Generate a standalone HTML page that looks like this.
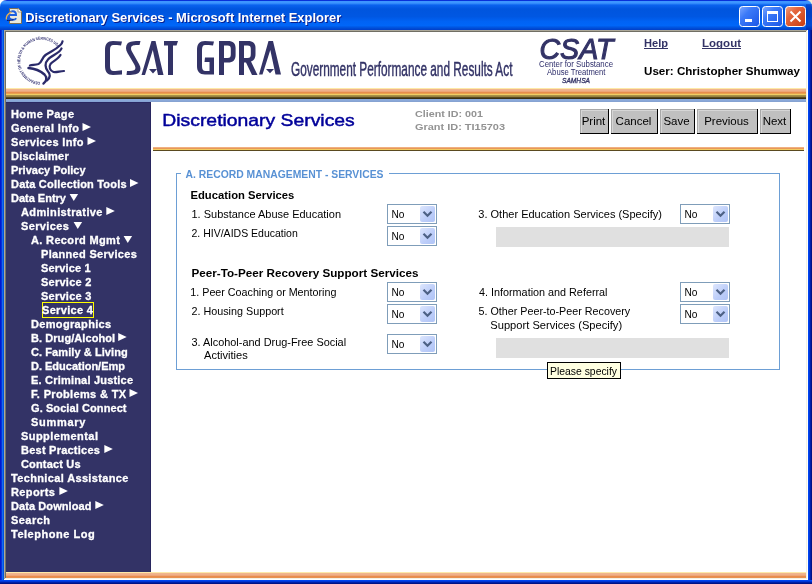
<!DOCTYPE html>
<html><head><meta charset="utf-8"><title>Discretionary Services</title>
<style>html,body{margin:0;padding:0;width:812px;height:584px;overflow:hidden;background:#fff}
svg{display:block;font-family:"Liberation Sans",sans-serif;will-change:transform}</style></head>
<body><svg width="812" height="584" viewBox="0 0 812 584">
<rect x="0" y="0" width="812" height="584" fill="#fff"/>
<defs>
<linearGradient id="tbg" x1="0" y1="0" x2="0" y2="30" gradientUnits="userSpaceOnUse">
<stop offset="0" stop-color="#0831d9"/><stop offset="0.033" stop-color="#0831d9"/>
<stop offset="0.04" stop-color="#3d95ff"/><stop offset="0.1" stop-color="#3d95ff"/>
<stop offset="0.17" stop-color="#0a62ee"/><stop offset="0.3" stop-color="#0055de"/>
<stop offset="0.55" stop-color="#0057e2"/><stop offset="0.72" stop-color="#0063f5"/>
<stop offset="0.85" stop-color="#0066f8"/><stop offset="0.93" stop-color="#0050da"/>
<stop offset="1" stop-color="#003ec8"/>
</linearGradient>
<linearGradient id="lb" x1="0" y1="0" x2="4" y2="0" gradientUnits="userSpaceOnUse">
<stop offset="0" stop-color="#0019cf"/><stop offset="0.5" stop-color="#0848f0"/><stop offset="1" stop-color="#166aee"/>
</linearGradient>
<linearGradient id="rb" x1="808" y1="0" x2="812" y2="0" gradientUnits="userSpaceOnUse">
<stop offset="0" stop-color="#0848f0"/><stop offset="0.5" stop-color="#0030c8"/><stop offset="1" stop-color="#001890"/>
</linearGradient>
<linearGradient id="bb" x1="0" y1="580" x2="0" y2="584" gradientUnits="userSpaceOnUse">
<stop offset="0" stop-color="#0848f0"/><stop offset="0.5" stop-color="#0030c8"/><stop offset="1" stop-color="#001890"/>
</linearGradient>
<linearGradient id="minb" x1="0" y1="0" x2="1" y2="1">
<stop offset="0" stop-color="#7fa8ff"/><stop offset="0.35" stop-color="#3c7af8"/><stop offset="1" stop-color="#1a55e6"/>
</linearGradient>
<linearGradient id="clb" x1="0" y1="0" x2="1" y2="1">
<stop offset="0" stop-color="#f0a080"/><stop offset="0.35" stop-color="#e4653c"/><stop offset="1" stop-color="#c83c10"/>
</linearGradient>
<linearGradient id="selb" x1="0" y1="0" x2="1" y2="1">
<stop offset="0" stop-color="#dde6fd"/><stop offset="0.6" stop-color="#bccdf9"/><stop offset="1" stop-color="#b0c4f6"/>
</linearGradient>
</defs>
<rect x="804" y="0" width="8" height="8" fill="#ece9d8"/>
<path d="M0,7 Q0,0 7,0 L805,0 Q812,0 812,7 L812,30 L0,30 Z" fill="url(#tbg)"/>
<rect x="0" y="30" width="1" height="554" fill="#0019cf"/>
<rect x="1" y="30" width="1" height="554" fill="#0831d9"/>
<rect x="2" y="30" width="1" height="554" fill="#166aee"/>
<rect x="3" y="30" width="1" height="554" fill="#0053e1"/>
<rect x="808" y="30" width="1" height="554" fill="#0045f0"/>
<rect x="809" y="30" width="1" height="554" fill="#0036d6"/>
<rect x="810" y="30" width="1" height="554" fill="#0020a8"/>
<rect x="811" y="30" width="1" height="554" fill="#001286"/>
<rect x="0" y="580" width="812" height="1" fill="#0045f0"/>
<rect x="0" y="581" width="812" height="1" fill="#0036d6"/>
<rect x="0" y="582" width="812" height="1" fill="#0020a8"/>
<rect x="0" y="583" width="812" height="1" fill="#001286"/>
<rect x="806" y="4" width="6" height="26" fill="#001890" opacity="0.35"/>
<rect x="4" y="30" width="804" height="1" fill="#aca899"/>
<rect x="4" y="30" width="1" height="550" fill="#aca899"/>
<rect x="5" y="31" width="802" height="1" fill="#716f64"/>
<rect x="5" y="31" width="1" height="548" fill="#716f64"/>
<rect x="806" y="31" width="1" height="549" fill="#f1efe2"/>
<rect x="5" y="578" width="802" height="1" fill="#f1efe2"/>
<rect x="807" y="30" width="1" height="550" fill="#fff"/>
<rect x="4" y="579" width="804" height="1" fill="#fff"/>
<text x="25.2" y="22" font-size="13.6" font-weight="bold" fill="#0a1e8c" textLength="316" lengthAdjust="spacingAndGlyphs" transform="translate(1,1)">Discretionary Services - Microsoft Internet Explorer</text>
<text x="25.2" y="22" font-size="13.6" font-weight="bold" fill="#fff" textLength="316" lengthAdjust="spacingAndGlyphs">Discretionary Services - Microsoft Internet Explorer</text>
<path d="M9.5,8.5 L18.5,8.5 L21.5,11.5 L21.5,23.5 L9.5,23.5 Z" fill="#ebe9dc" stroke="#7d7057"/>
<path d="M18,8.5 L18,12 L21.5,12" fill="#fff" stroke="#9a9080" stroke-width="0.8"/>
<path d="M10,15 L16,15 C16,12.5 14.5,11.3 12.7,11.3 C10.3,11.3 8.8,13.3 8.8,15.6 C8.8,18.2 10.5,19.8 12.8,19.8 C14.3,19.8 15.5,19.2 16.2,18.2" fill="none" stroke="#1c5ee0" stroke-width="2"/>
<path d="M6.3,19.5 C6,16.5 8,13.5 11.5,11.8" fill="none" stroke="#e8b050" stroke-width="1.3"/>
<path d="M7,20.5 C9,20.5 11,20.5 13.5,19.6" fill="none" stroke="#101860" stroke-width="1"/>
<rect x="739.5" y="6.5" width="20" height="20" rx="3" fill="url(#minb)" stroke="#fff"/>
<rect x="762.5" y="6.5" width="20" height="20" rx="3" fill="url(#minb)" stroke="#fff"/>
<rect x="785.5" y="6.5" width="20" height="20" rx="3" fill="url(#clb)" stroke="#fff"/>
<rect x="745" y="19" width="7" height="3" fill="#fff"/>
<rect x="767.5" y="11.5" width="10" height="10" fill="none" stroke="#fff"/>
<rect x="767" y="11" width="11" height="3" fill="#fff"/>
<path d="M790.5,11.5 L800.5,21.5 M800.5,11.5 L790.5,21.5" stroke="#fff" stroke-width="2"/>
<rect x="6" y="88" width="800" height="1" fill="#fde9a8"/>
<rect x="6" y="89" width="800" height="1" fill="#f0b48c"/>
<rect x="6" y="90" width="800" height="1" fill="#efb08a"/>
<rect x="6" y="91" width="800" height="1" fill="#eda577"/>
<rect x="6" y="92" width="800" height="1" fill="#e88c4c"/>
<rect x="6" y="93" width="800" height="1" fill="#eaa050"/>
<rect x="6" y="94" width="800" height="1" fill="#f0cc62"/>
<rect x="6" y="95" width="800" height="1" fill="#a89048"/>
<rect x="6" y="96" width="800" height="1" fill="#98823e"/>
<rect x="6" y="97" width="800" height="1" fill="#5a4a20"/>
<rect x="6" y="98" width="800" height="1" fill="#3a2e12"/>
<rect x="6" y="99" width="800" height="1" fill="#8aa8d8"/>
<rect x="6" y="100" width="800" height="1" fill="#8aa8d8"/>
<rect x="6" y="101" width="800" height="1" fill="#86a3d2"/>
<rect x="6" y="102" width="145" height="470" fill="#333366"/>
<rect x="6" y="102" width="145" height="1" fill="#2a2862"/>
<rect x="150" y="102" width="1" height="470" fill="#28265f"/>
<rect x="6" y="572" width="800" height="1" fill="#fde9a8"/>
<rect x="6" y="573" width="800" height="1" fill="#f0b48c"/>
<rect x="6" y="574" width="800" height="1" fill="#efb08a"/>
<rect x="6" y="575" width="800" height="1" fill="#eda577"/>
<rect x="6" y="576" width="800" height="1" fill="#e88c4c"/>
<rect x="6" y="577" width="800" height="1" fill="#e8904e"/>
<rect x="153" y="147" width="651" height="1" fill="#f0b080"/>
<rect x="153" y="148" width="651" height="1" fill="#e8985a"/>
<rect x="153" y="149" width="651" height="1" fill="#f2cc60"/>
<rect x="153" y="150" width="651" height="1" fill="#5a4a20"/>
<defs><path id="hhsarc" d="M40,82 A21.2,21.2 0 1 1 57.5,47"/></defs>
<text font-size="4.2" font-weight="bold" fill="#2e2e70"><textPath href="#hhsarc" textLength="84" lengthAdjust="spacingAndGlyphs">DEPARTMENT OF HEALTH &amp; HUMAN SERVICES USA</textPath></text>
<g fill="none" stroke="#2a2a6a" stroke-linecap="round">
<path d="M62.5,41.5 C62,47 51,51 45.5,55 C41.5,58 42,62.5 38.5,64 C35.5,65 32,64.8 30,65.5" stroke-width="2.3"/>
<path d="M61.5,48.5 C60,53 51,56 48,59.5 C44.5,63 45,68 48,71.5 C50.5,74 50.5,77.5 47,80.5" stroke-width="2.3"/>
<path d="M60.5,55 C58.5,59 53,61 50.5,64 C48.5,67 50,70.5 53.5,72 C57,72.5 60,71 64,71" stroke-width="2.2"/>
<path d="M28.5,68 C35,68.5 40,70.5 44.5,74.5 C47.5,77.5 46.5,81.5 43.5,83.5" stroke-width="2.4"/>
</g>
<g fill="#333366" fill-rule="evenodd">
<path d="M122,41.5 L121,45.5 C118,45 116,45 113.5,45 C111,45 110,46.5 110,50 L110,66 C110,69.5 111,71 113.5,71 C116,71 119,70.8 122,70.3 L122,74.5 C119,74.8 116,75 113,75 C107.5,75 105,72 105,66 L105,50 C105,44 107.5,41 113,41 C116,41 119,41.2 122,41.5 Z"/>
<path d="M140.5,41 L139.5,45 C136,45 132.5,45 131.5,46.5 C130.5,48 131,50 132.5,52.5 L139,64 C141,67.5 141,70.5 139,72.5 C137,74.5 132,75 126.5,75 L127,71 C131,71 134,71 135,69.5 C135.8,68 135.5,66.5 134,64 L127.5,53 C125.5,49.5 125.5,46 127.5,43.5 C129.5,41.5 134,41 140.5,41 Z"/>
<path d="M151.5,41 L155.5,41 L163.5,75 L158,75 L152.8,50 L145,75 L141.5,75 Z M149,69 L157,69 L153,73.5 Z"/>
<path d="M164,41 L178,41 L176.5,45.5 L173,45.5 L173,75 L168,75 L168,45.5 L164,45.5 Z"/>
<path d="M214,41.5 L213,45.5 C210,45 207.5,45 205,45 C203,45 202,46.5 202,50 L202,66 C202,69.5 203,71 205.5,71 L209.5,71 L209.5,62 L204.5,62 L205,57.5 L214,57.5 L214,74.5 L205,74.5 C199.5,74.5 197,71.5 197,66 L197,50 C197,44 199.5,41 205,41 C208,41 211,41.2 214,41.5 Z"/>
<path d="M219,41 L228,41 C233,41 235.6,43.5 235.6,48 L235.6,55 C235.6,60 233,62.5 228,62.5 L224,62.5 L224,75 L219,75 Z M224,45.5 L227.5,45.5 C230,45.5 230.8,46.5 230.8,49 L230.8,54.5 C230.8,57 230,58 227.5,58 L224,58 Z"/>
<path d="M239,41 L248,41 C253,41 255.5,43.5 255.5,48 L255.5,54 C255.5,58 254,60.5 251,61.5 L257.5,75 L252,75 L246,62.5 L244,62.5 L244,75 L239,75 Z M244,45.5 L247.5,45.5 C250,45.5 250.8,46.5 250.8,49 L250.8,54 C250.8,57 250,58 247.5,58 L244,58 Z"/>
<path d="M268.5,41 L273,41 L281,74.5 L275.5,74.5 L270.3,50 L262.5,74.5 L259,74.5 Z M266,69 L274,69 L270,73.2 Z"/>
</g>
<text x="0" y="76" font-size="19.5" fill="#333366" transform="translate(291,0) scale(0.607,1)" stroke="#333366" stroke-width="0.45">Government Performance and Results Act</text>
<text x="539.5" y="58.5" font-size="29" font-style="italic" fill="#333366" textLength="74" lengthAdjust="spacingAndGlyphs" stroke="#333366" stroke-width="1.1">CSAT</text>
<text x="539" y="66.7" font-size="9.6" fill="#2e2e6b" textLength="74" lengthAdjust="spacingAndGlyphs">Center for Substance</text>
<text x="547" y="75.3" font-size="9.6" fill="#2e2e6b" textLength="58.5" lengthAdjust="spacingAndGlyphs">Abuse Treatment</text>
<text x="562" y="82.5" font-size="6.5" font-style="italic" fill="#333366" textLength="28" lengthAdjust="spacingAndGlyphs" stroke="#333366" stroke-width="0.3">SAMHSA</text>
<text x="644" y="47" font-size="11" font-weight="bold" fill="#333366" textLength="24" lengthAdjust="spacingAndGlyphs">Help</text>
<rect x="644" y="48" width="24" height="1" fill="#333366"/>
<text x="702" y="47" font-size="11" font-weight="bold" fill="#333366" textLength="39" lengthAdjust="spacingAndGlyphs">Logout</text>
<rect x="702" y="48" width="39" height="1" fill="#333366"/>
<text x="644" y="75" font-size="11" font-weight="bold" fill="#000" textLength="156" lengthAdjust="spacingAndGlyphs">User: Christopher Shumway</text>
<g id="nav">
<text id="n0" x="11" y="118" font-size="11" font-weight="bold" fill="#fff" stroke="#fff" stroke-width="0.3" textLength="63.12" lengthAdjust="spacing">Home Page</text>
<text id="n1" x="11" y="132" font-size="11" font-weight="bold" fill="#fff" stroke="#fff" stroke-width="0.3" textLength="67.94" lengthAdjust="spacing">General Info</text>
<path d="M82.5,123 L91.0,127 L82.5,131 Z" fill="#fff"/>
<text id="n2" x="11" y="146" font-size="11" font-weight="bold" fill="#fff" stroke="#fff" stroke-width="0.3" textLength="72.48" lengthAdjust="spacing">Services Info</text>
<path d="M87.5,137 L96.0,141 L87.5,145 Z" fill="#fff"/>
<text id="n3" x="11" y="160" font-size="11" font-weight="bold" fill="#fff" stroke="#fff" stroke-width="0.3" textLength="57.66" lengthAdjust="spacing">Disclaimer</text>
<text id="n4" x="11" y="174" font-size="11" font-weight="bold" fill="#fff" stroke="#fff" stroke-width="0.3" textLength="74.56" lengthAdjust="spacing">Privacy Policy</text>
<text id="n5" x="11" y="188" font-size="11" font-weight="bold" fill="#fff" stroke="#fff" stroke-width="0.3" textLength="115.54" lengthAdjust="spacing">Data Collection Tools</text>
<path d="M130.0,179 L138.5,183 L130.0,187 Z" fill="#fff"/>
<text id="n6" x="11" y="202" font-size="11" font-weight="bold" fill="#fff" stroke="#fff" stroke-width="0.3" textLength="54.98" lengthAdjust="spacing">Data Entry</text>
<path d="M69.6,194 L78.1,194 L73.8,201 Z" fill="#fff"/>
<text id="n7" x="21" y="216" font-size="11" font-weight="bold" fill="#fff" stroke="#fff" stroke-width="0.3" textLength="81.47" lengthAdjust="spacing">Administrative</text>
<path d="M106.3,207 L114.8,211 L106.3,215 Z" fill="#fff"/>
<text id="n8" x="21" y="230" font-size="11" font-weight="bold" fill="#fff" stroke="#fff" stroke-width="0.3" textLength="47.77" lengthAdjust="spacing">Services</text>
<path d="M73.6,222 L82.1,222 L77.8,229 Z" fill="#fff"/>
<text id="n9" x="31" y="244" font-size="11" font-weight="bold" fill="#fff" stroke="#fff" stroke-width="0.3" textLength="88.89" lengthAdjust="spacing">A. Record Mgmt</text>
<path d="M123.6,236 L132.1,236 L127.8,243 Z" fill="#fff"/>
<text id="n10" x="41" y="258" font-size="11" font-weight="bold" fill="#fff" stroke="#fff" stroke-width="0.3" textLength="95.86" lengthAdjust="spacing">Planned Services</text>
<text id="n11" x="41" y="272" font-size="11" font-weight="bold" fill="#fff" stroke="#fff" stroke-width="0.3" textLength="49.53" lengthAdjust="spacing">Service 1</text>
<text id="n12" x="41" y="286" font-size="11" font-weight="bold" fill="#fff" stroke="#fff" stroke-width="0.3" textLength="50.33" lengthAdjust="spacing">Service 2</text>
<text id="n13" x="41" y="300" font-size="11" font-weight="bold" fill="#fff" stroke="#fff" stroke-width="0.3" textLength="50.33" lengthAdjust="spacing">Service 3</text>
<rect x="42.5" y="302.5" width="51" height="15" fill="none" stroke="#ffff00"/>
<text id="n14" x="42" y="314" font-size="11" font-weight="bold" fill="#fff" stroke="#fff" stroke-width="0.3" textLength="50.93" lengthAdjust="spacing">Service 4</text>
<text id="n15" x="31" y="328" font-size="11" font-weight="bold" fill="#fff" stroke="#fff" stroke-width="0.3" textLength="80.17" lengthAdjust="spacing">Demographics</text>
<text id="n16" x="31" y="342" font-size="11" font-weight="bold" fill="#fff" stroke="#fff" stroke-width="0.3" textLength="84.11" lengthAdjust="spacing">B. Drug/Alcohol</text>
<path d="M118.2,333 L126.7,337 L118.2,341 Z" fill="#fff"/>
<text id="n17" x="31" y="356" font-size="11" font-weight="bold" fill="#fff" stroke="#fff" stroke-width="0.3" textLength="96.71" lengthAdjust="spacing">C. Family &amp; Living</text>
<text id="n18" x="31" y="370" font-size="11" font-weight="bold" fill="#fff" stroke="#fff" stroke-width="0.3" textLength="93.97" lengthAdjust="spacing">D. Education/Emp</text>
<text id="n19" x="31" y="384" font-size="11" font-weight="bold" fill="#fff" stroke="#fff" stroke-width="0.3" textLength="102.04" lengthAdjust="spacing">E. Criminal Justice</text>
<text id="n20" x="31" y="398" font-size="11" font-weight="bold" fill="#fff" stroke="#fff" stroke-width="0.3" textLength="95.11" lengthAdjust="spacing">F. Problems &amp; TX</text>
<path d="M129.5,389 L138.0,393 L129.5,397 Z" fill="#fff"/>
<text id="n21" x="31" y="412" font-size="11" font-weight="bold" fill="#fff" stroke="#fff" stroke-width="0.3" textLength="95.54" lengthAdjust="spacing">G. Social Connect</text>
<text id="n22" x="31" y="426" font-size="11" font-weight="bold" fill="#fff" stroke="#fff" stroke-width="0.3" textLength="54.34" lengthAdjust="spacing">Summary</text>
<text id="n23" x="21" y="440" font-size="11" font-weight="bold" fill="#fff" stroke="#fff" stroke-width="0.3" textLength="76.97" lengthAdjust="spacing">Supplemental</text>
<text id="n24" x="21" y="454" font-size="11" font-weight="bold" fill="#fff" stroke="#fff" stroke-width="0.3" textLength="78.88" lengthAdjust="spacing">Best Practices</text>
<path d="M104.3,445 L112.8,449 L104.3,453 Z" fill="#fff"/>
<text id="n25" x="21" y="468" font-size="11" font-weight="bold" fill="#fff" stroke="#fff" stroke-width="0.3" textLength="59.51" lengthAdjust="spacing">Contact Us</text>
<text id="n26" x="11" y="482" font-size="11" font-weight="bold" fill="#fff" stroke="#fff" stroke-width="0.3" textLength="117.42" lengthAdjust="spacing">Technical Assistance</text>
<text id="n27" x="11" y="496" font-size="11" font-weight="bold" fill="#fff" stroke="#fff" stroke-width="0.3" textLength="43.96" lengthAdjust="spacing">Reports</text>
<path d="M59.4,487 L67.9,491 L59.4,495 Z" fill="#fff"/>
<text id="n28" x="11" y="510" font-size="11" font-weight="bold" fill="#fff" stroke="#fff" stroke-width="0.3" textLength="80.45" lengthAdjust="spacing">Data Download</text>
<path d="M95.3,501 L103.8,505 L95.3,509 Z" fill="#fff"/>
<text id="n29" x="11" y="524" font-size="11" font-weight="bold" fill="#fff" stroke="#fff" stroke-width="0.3" textLength="38.95" lengthAdjust="spacing">Search</text>
<text id="n30" x="11" y="538" font-size="11" font-weight="bold" fill="#fff" stroke="#fff" stroke-width="0.3" textLength="83.61" lengthAdjust="spacing">Telephone Log</text>
</g>
<text x="162.3" y="126" font-size="16.3" fill="#000099" textLength="192.5" lengthAdjust="spacingAndGlyphs" stroke="#000099" stroke-width="0.45">Discretionary Services</text>
<text x="415" y="117" font-size="9.3" font-weight="bold" fill="#939393" textLength="68" lengthAdjust="spacingAndGlyphs">Client ID: 001</text>
<text x="415" y="130" font-size="9.3" font-weight="bold" fill="#939393" textLength="90" lengthAdjust="spacingAndGlyphs">Grant ID: TI15703</text>
<rect x="580" y="109" width="29" height="25" fill="#000"/>
<rect x="580" y="109" width="28" height="24" fill="#a8a8a8"/>
<rect x="581" y="110" width="27" height="23" fill="#d6d6d6"/>
<rect x="582" y="111" width="26" height="22" fill="#c0c0c0"/>
<text x="593.5" y="125" font-size="11.5" fill="#000" text-anchor="middle">Print</text>
<rect x="611" y="109" width="47" height="25" fill="#000"/>
<rect x="611" y="109" width="46" height="24" fill="#a8a8a8"/>
<rect x="612" y="110" width="45" height="23" fill="#d6d6d6"/>
<rect x="613" y="111" width="44" height="22" fill="#c0c0c0"/>
<text x="633.5" y="125" font-size="11.5" fill="#000" text-anchor="middle">Cancel</text>
<rect x="660" y="109" width="35" height="25" fill="#000"/>
<rect x="660" y="109" width="34" height="24" fill="#a8a8a8"/>
<rect x="661" y="110" width="33" height="23" fill="#d6d6d6"/>
<rect x="662" y="111" width="32" height="22" fill="#c0c0c0"/>
<text x="676.5" y="125" font-size="11.5" fill="#000" text-anchor="middle">Save</text>
<rect x="697" y="109" width="61" height="25" fill="#000"/>
<rect x="697" y="109" width="60" height="24" fill="#a8a8a8"/>
<rect x="698" y="110" width="59" height="23" fill="#d6d6d6"/>
<rect x="699" y="111" width="58" height="22" fill="#c0c0c0"/>
<text x="726.5" y="125" font-size="11.5" fill="#000" text-anchor="middle">Previous</text>
<rect x="760" y="109" width="31" height="25" fill="#000"/>
<rect x="760" y="109" width="30" height="24" fill="#a8a8a8"/>
<rect x="761" y="110" width="29" height="23" fill="#d6d6d6"/>
<rect x="762" y="111" width="28" height="22" fill="#c0c0c0"/>
<text x="774.5" y="125" font-size="11.5" fill="#000" text-anchor="middle">Next</text>
<rect x="176" y="173" width="1" height="197" fill="#6d9fd5"/>
<rect x="779" y="173" width="1" height="197" fill="#6d9fd5"/>
<rect x="176" y="369" width="604" height="1" fill="#6d9fd5"/>
<rect x="176" y="173" width="5" height="1" fill="#6d9fd5"/>
<rect x="389" y="173" width="391" height="1" fill="#6d9fd5"/>
<text x="185.5" y="178" font-size="11" font-weight="bold" fill="#5891d4" textLength="198" lengthAdjust="spacingAndGlyphs">A. RECORD MANAGEMENT - SERVICES</text>
<text x="190.5" y="199" font-size="11" font-weight="bold" fill="#000" textLength="103.8" lengthAdjust="spacingAndGlyphs">Education Services</text>
<text x="191.5" y="218" font-size="11" fill="#000" textLength="149.5" lengthAdjust="spacingAndGlyphs">1. Substance Abuse Education</text>
<text x="191.5" y="237" font-size="11" fill="#000" textLength="106.3" lengthAdjust="spacingAndGlyphs">2. HIV/AIDS Education</text>
<text x="478.3" y="218" font-size="11" fill="#000" textLength="183.6" lengthAdjust="spacingAndGlyphs">3. Other Education Services (Specify)</text>
<text x="191.5" y="276.5" font-size="11" font-weight="bold" fill="#000" textLength="227" lengthAdjust="spacingAndGlyphs">Peer-To-Peer Recovery Support Services</text>
<text x="190.3" y="296" font-size="11" fill="#000" textLength="146.1" lengthAdjust="spacingAndGlyphs">1. Peer Coaching or Mentoring</text>
<text x="191.5" y="314.5" font-size="11" fill="#000" textLength="92.2" lengthAdjust="spacingAndGlyphs">2. Housing Support</text>
<text x="191.5" y="345.5" font-size="11" fill="#000" textLength="154.6" lengthAdjust="spacingAndGlyphs">3. Alcohol-and Drug-Free Social</text>
<text x="204" y="359" font-size="11" fill="#000" textLength="43.8" lengthAdjust="spacingAndGlyphs">Activities</text>
<text x="479" y="296" font-size="11" fill="#000" textLength="128.5" lengthAdjust="spacingAndGlyphs">4. Information and Referral</text>
<text x="478.5" y="315" font-size="11" fill="#000" textLength="151.7" lengthAdjust="spacingAndGlyphs">5. Other Peer-to-Peer Recovery</text>
<text x="490.3" y="329" font-size="11" fill="#000" textLength="131.8" lengthAdjust="spacingAndGlyphs">Support Services (Specify)</text>
<rect x="387.5" y="204.5" width="49" height="19" fill="#fff" stroke="#7f9db9"/>
<text x="391.5" y="217.5" font-size="11" fill="#000" textLength="13" lengthAdjust="spacingAndGlyphs">No</text>
<rect x="420" y="206" width="15" height="16" rx="2" fill="url(#selb)"/>
<path d="M423.5,211.8 L427.5,215.8 L431.5,211.8" fill="none" stroke="#4d6185" stroke-width="2.2"/>
<rect x="387.5" y="226.5" width="49" height="19" fill="#fff" stroke="#7f9db9"/>
<text x="391.5" y="239.5" font-size="11" fill="#000" textLength="13" lengthAdjust="spacingAndGlyphs">No</text>
<rect x="420" y="228" width="15" height="16" rx="2" fill="url(#selb)"/>
<path d="M423.5,233.8 L427.5,237.8 L431.5,233.8" fill="none" stroke="#4d6185" stroke-width="2.2"/>
<rect x="680.5" y="204.5" width="49" height="19" fill="#fff" stroke="#7f9db9"/>
<text x="684.5" y="217.5" font-size="11" fill="#000" textLength="13" lengthAdjust="spacingAndGlyphs">No</text>
<rect x="713" y="206" width="15" height="16" rx="2" fill="url(#selb)"/>
<path d="M716.5,211.8 L720.5,215.8 L724.5,211.8" fill="none" stroke="#4d6185" stroke-width="2.2"/>
<rect x="387.5" y="282.5" width="49" height="19" fill="#fff" stroke="#7f9db9"/>
<text x="391.5" y="295.5" font-size="11" fill="#000" textLength="13" lengthAdjust="spacingAndGlyphs">No</text>
<rect x="420" y="284" width="15" height="16" rx="2" fill="url(#selb)"/>
<path d="M423.5,289.8 L427.5,293.8 L431.5,289.8" fill="none" stroke="#4d6185" stroke-width="2.2"/>
<rect x="387.5" y="304.5" width="49" height="19" fill="#fff" stroke="#7f9db9"/>
<text x="391.5" y="317.5" font-size="11" fill="#000" textLength="13" lengthAdjust="spacingAndGlyphs">No</text>
<rect x="420" y="306" width="15" height="16" rx="2" fill="url(#selb)"/>
<path d="M423.5,311.8 L427.5,315.8 L431.5,311.8" fill="none" stroke="#4d6185" stroke-width="2.2"/>
<rect x="387.5" y="334.5" width="49" height="19" fill="#fff" stroke="#7f9db9"/>
<text x="391.5" y="347.5" font-size="11" fill="#000" textLength="13" lengthAdjust="spacingAndGlyphs">No</text>
<rect x="420" y="336" width="15" height="16" rx="2" fill="url(#selb)"/>
<path d="M423.5,341.8 L427.5,345.8 L431.5,341.8" fill="none" stroke="#4d6185" stroke-width="2.2"/>
<rect x="680.5" y="282.5" width="49" height="19" fill="#fff" stroke="#7f9db9"/>
<text x="684.5" y="295.5" font-size="11" fill="#000" textLength="13" lengthAdjust="spacingAndGlyphs">No</text>
<rect x="713" y="284" width="15" height="16" rx="2" fill="url(#selb)"/>
<path d="M716.5,289.8 L720.5,293.8 L724.5,289.8" fill="none" stroke="#4d6185" stroke-width="2.2"/>
<rect x="680.5" y="304.5" width="49" height="19" fill="#fff" stroke="#7f9db9"/>
<text x="684.5" y="317.5" font-size="11" fill="#000" textLength="13" lengthAdjust="spacingAndGlyphs">No</text>
<rect x="713" y="306" width="15" height="16" rx="2" fill="url(#selb)"/>
<path d="M716.5,311.8 L720.5,315.8 L724.5,311.8" fill="none" stroke="#4d6185" stroke-width="2.2"/>
<rect x="496" y="227" width="233" height="20" fill="#e0e0e0"/>
<rect x="496" y="338" width="233" height="20" fill="#e0e0e0"/>
<rect x="547.5" y="362.5" width="73" height="16" fill="#ffffe1" stroke="#000"/>
<text x="550" y="374.5" font-size="11" fill="#000" textLength="67" lengthAdjust="spacingAndGlyphs">Please specify</text>
</svg></body></html>
